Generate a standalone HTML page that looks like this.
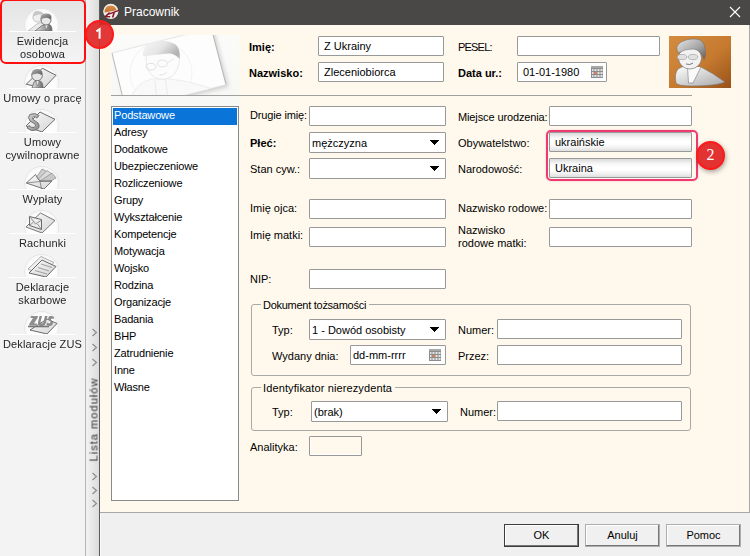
<!DOCTYPE html>
<html><head><meta charset="utf-8">
<style>
*{margin:0;padding:0;box-sizing:border-box}
html,body{width:750px;height:556px;overflow:hidden;background:#f3f3f3;font-family:"Liberation Sans",sans-serif;font-size:11px;color:#000}
.a{position:absolute}
.sb{left:0;top:0;width:85px;height:556px;background:#f3f3f3}
.sbl{left:85px;top:0;width:1px;height:556px;background:#b4b4b4}
.strip{left:86px;top:0;width:13px;height:556px;background:linear-gradient(to right,#f2f2f2,#dcdcdc)}
.dl{left:99px;top:0;width:1px;height:556px;background:#5a5a5a}
.title{left:100px;top:0;width:650px;height:25px;background:#4a4846}
.cream{left:100px;top:25px;width:650px;height:488px;background:#fff9ed;border-right:1px solid #a8a8a8;border-bottom:1px solid #a8a8a8}
.foot{left:100px;top:513px;width:650px;height:43px;background:#f0f0f0}
.lbl{height:20px;line-height:20px;white-space:nowrap}
.b{font-weight:bold}
.in{background:#fff;border:1px solid #999;border-radius:1px;height:20px;line-height:18px;padding-left:5px;white-space:nowrap}
.cb{height:21px;line-height:20px;padding-left:2px}
.ro{background:linear-gradient(to bottom,#dadada,#f6f6f6 25%,#fff 45%,#fff 60%,#f2f2f2 80%,#dedede)}
.tri{position:absolute;right:6px;top:7px;fill:#000}
.list{left:111px;top:106px;width:128px;height:395px;background:#fff;border:1px solid #8a8a8a}
.li{position:absolute;left:1px;width:124px;height:17px;line-height:15px;padding-left:1px;letter-spacing:-0.15px}
.sel{background:#0a74d9;color:#fff}
.grp{border:1px solid #a8a8a8;border-radius:3px}
.leg{background:#fff9ed;padding:0 3px 0 2px;height:14px;line-height:14px}
.btn{top:524px;width:75px;height:23px;background:#f0f0f0;border:1px solid #adadad;box-shadow:inset -1px -1px 0 #777,inset 1px 1px 0 #fff;text-align:center;line-height:21px}
.sbt{width:85px;text-align:center;color:#262626;letter-spacing:0.15px;line-height:13px;will-change:transform}
.sep{left:9px;width:67px;height:1px;background:#fff}
.circ{width:34px;height:26px;overflow:hidden;left:25px}
.circ div{width:34px;height:34px;border-radius:50%;background:radial-gradient(circle at 50% 40%,#fbfbfb,#ececec)}
.chev{left:92px;width:6px;height:8px}
</style></head><body>
<!-- sidebar -->
<div class="a sb"></div>
<div class="a" style="left:0;top:0;width:85px;height:64px;background:linear-gradient(to bottom,#e4e4e4,#f0f0f0 70%,#f4f4f4)"></div>
<div class="a sbl"></div>
<div class="a strip"></div>
<div class="a dl"></div>
<svg class="a" style="left:0;top:0" width="86" height="360" viewBox="0 0 86 360">
<defs>
<radialGradient id="cg" cx="50%" cy="50%" r="50%"><stop offset="0" stop-color="#ffffff"/><stop offset="0.8" stop-color="#fcfcfc"/><stop offset="0.93" stop-color="#f6f6f6"/><stop offset="0.98" stop-color="#e2e2e2"/><stop offset="1" stop-color="#ededed"/></radialGradient>
<linearGradient id="dg" x1="0" y1="0" x2="1" y2="1"><stop offset="0" stop-color="#fbfbfb"/><stop offset="1" stop-color="#d4d4d4"/></linearGradient>
<linearGradient id="hg" x1="0" y1="0" x2="1" y2="1"><stop offset="0" stop-color="#b4b4b4"/><stop offset="1" stop-color="#5a5a5a"/></linearGradient>
<linearGradient id="bg2" x1="0" y1="0" x2="1" y2="0"><stop offset="0" stop-color="#e4e4e4"/><stop offset="1" stop-color="#6a6a6a"/></linearGradient>
<linearGradient id="sg" x1="0" y1="0" x2="1" y2="1"><stop offset="0" stop-color="#d8d8d8"/><stop offset="1" stop-color="#8a8a8a"/></linearGradient>
<clipPath id="c1"><rect x="0" y="0" width="40" height="25"/></clipPath>
</defs>
<g transform="translate(22,6)">
 <g clip-path="url(#c1)"><circle cx="19.7" cy="19.5" r="17.5" fill="url(#cg)"/>
 <path d="M6,25 L15,18 Q18,16 21,17 L26,25 Z" fill="#ebebeb" stroke="#b4b4b4" stroke-width="0.8"/>
 <circle cx="15.5" cy="11.5" r="4.6" fill="#efefef" stroke="#b8b8b8" stroke-width="0.8"/>
 <path d="M10.8,10.5 Q10.5,5 16,5 Q21,5.5 21.5,8 Q17,7.5 10.8,10.5Z" fill="#c8c8c8"/>
 <path d="M13,25 L20,19.5 Q24,18 27,18.5 Q30,19 30,25 Z" fill="url(#bg2)" stroke="#6a6a6a" stroke-width="0.8"/>
 <path d="M23,19 L24,24 L26,19" fill="#f4f4f4" stroke="#777" stroke-width="0.5"/>
 <circle cx="24" cy="14" r="5" fill="#e8e8e8" stroke="#6e6e6e" stroke-width="0.9"/>
 <path d="M18.6,13.5 Q18,7 24,7.5 Q29.5,7.5 29.5,11.5 L28.6,13.5 Q25,10 18.6,13.5Z" fill="url(#hg)"/>
 </g>
</g>
<rect x="9" y="31" width="67" height="1" fill="#fff"/>
<g transform="translate(22,63)">
 <g clip-path="url(#c1)"><circle cx="19.7" cy="19.5" r="17.5" fill="url(#cg)"/>
 <path d="M20.3,5.2 L34,12.3 L22,25 L4.2,21.3 Z" fill="url(#dg)" stroke="#5a5a5a" stroke-width="0.9"/>
 <path d="M10,25 L12,19 Q15,17 18,18 Q21,19 21,25Z" fill="url(#bg2)" stroke="#6a6a6a" stroke-width="0.8"/>
 <path d="M14,18 L15.5,23 L17,18" fill="#f4f4f4" stroke="#777" stroke-width="0.5"/>
 <circle cx="15" cy="12.5" r="5.3" fill="#e6e6e6" stroke="#6a6a6a" stroke-width="0.9"/>
 <path d="M9.6,12 Q9.5,5.8 15,6 Q20.5,6.2 20.5,10.5 L19.6,12 Q16,9 9.6,12Z" fill="url(#hg)"/>
 </g>
</g>
<rect x="9" y="88" width="67" height="1" fill="#fff"/>
<g transform="translate(22,107)">
 <g clip-path="url(#c1)"><circle cx="19.7" cy="19.5" r="17.5" fill="url(#cg)"/>
 <path d="M18,5 L33,12.3 L20,25 L4,19 Z" fill="url(#dg)" stroke="#5a5a5a" stroke-width="0.9"/>
 <path d="M17,8.5 Q13,5 8,7.5 Q5,10 8,14 L13,17 Q15,19 12,20.5 Q9,21 7,18.5 L5,21 Q9,25 14,23 Q19,20.5 16,16 L11,12.5 Q9.5,10.5 11.5,9.8 Q13.5,9.5 15,11Z" fill="url(#sg)" stroke="#6a6a6a" stroke-width="0.9"/>
 </g>
</g>
<rect x="9" y="132" width="67" height="1" fill="#fff"/>
<g transform="translate(22,164)">
 <g clip-path="url(#c1)"><circle cx="19.7" cy="19.5" r="17.5" fill="url(#cg)"/>
 <path d="M14,14 L20,5 L26,8 L20,17Z" fill="#cdcdcd" stroke="#8a8a8a" stroke-width="0.7"/>
 <path d="M16,15.5 L25,6.5 L30,10 L22,18Z" fill="#dcdcdc" stroke="#8a8a8a" stroke-width="0.7"/>
 <path d="M18,17 L30,9 L34,14 L24,20Z" fill="#c8c8c8" stroke="#8a8a8a" stroke-width="0.7"/>
 <path d="M4.3,19 L13.5,10.5 L16,15 L18,17 L30,17 L22,25 Z" fill="url(#dg)" stroke="#6a6a6a" stroke-width="0.9"/>
 <path d="M4.3,19 L18,17.5 L30,17 M18,17.5 L19.5,25" fill="none" stroke="#777" stroke-width="0.8"/>
 </g>
</g>
<rect x="9" y="189" width="67" height="1" fill="#fff"/>
<g transform="translate(22,208)">
 <g clip-path="url(#c1)"><circle cx="19.7" cy="19.5" r="17.5" fill="url(#cg)"/>
 <path d="M18.5,5 L33,12.5 L20,25 L4,19 Z" fill="url(#dg)" stroke="#6a6a6a" stroke-width="0.9"/>
 <path d="M7.5,8.5 L19.5,11.5 L19.5,21.5 L7.5,17.5Z" fill="#ececec" stroke="#6a6a6a" stroke-width="1"/>
 <path d="M8.5,9.5 L13.5,16 L19,12.5 M7.5,17.5 L11.5,14 M19.5,21.5 L15.5,16" fill="none" stroke="#7a7a7a" stroke-width="0.8"/>
 </g>
</g>
<rect x="9" y="233" width="67" height="1" fill="#fff"/>
<g transform="translate(22,252)">
 <g clip-path="url(#c1)"><circle cx="19.7" cy="19.5" r="17.5" fill="url(#cg)"/>
 <path d="M6,17 L19,4.5 L32,10.5 L19,23 Z" fill="#f0f0f0" stroke="#9a9a9a" stroke-width="0.8"/>
 <path d="M7,21 L20,8 L34,14.5 L24,25 Z" fill="url(#dg)" stroke="#5a5a5a" stroke-width="0.9"/>
 <path d="M19,12 L30,15.5 M16,15.5 L27,19 M13,18.5 L25,22" stroke="#a4a4a4" stroke-width="1.3"/>
 </g>
</g>
<rect x="9" y="277" width="67" height="1" fill="#fff"/>
<g transform="translate(22,309)">
 <g clip-path="url(#c1)"><circle cx="19.7" cy="19.5" r="17.5" fill="url(#cg)"/>
 <path d="M8,21 L25,10 L35,14.5 L25,25 Z" fill="url(#dg)" stroke="#5a5a5a" stroke-width="0.9"/>
 <path d="M9,7 L16,7 L15.5,9 L12,14.5 L15,14.5 L14.5,16.5 L7,16.5 L7.5,14.5 L11,9 L8.5,9 Z" fill="#8e8e8e"/>
 <path d="M17.5,7 L20,7 L18.5,13 Q18.5,14.5 20,14.5 Q21,14.5 21.5,13 L23,7 L25.5,7 L24,13.5 Q23,17 19.5,17 Q15.5,17 16,13.5Z" fill="#8a8a8a"/>
 <path d="M32,8 Q30,6.5 28,7 Q25.5,8 26.5,10.5 L28.5,12.5 Q29,14 27.5,14.5 Q26,14.5 25,13.5 L24.5,16 Q26,17 28,17 Q31,16.5 31,13.5 L29,11 Q28.5,9.5 30,9.5 Q31,9.5 31.5,10Z" fill="#8a8a8a"/>
 <path d="M6,17.5 L27,17.5" stroke="#777" stroke-width="1.6"/>
 </g>
</g>
<rect x="9" y="334" width="67" height="1" fill="#fff"/>
</svg>
<div class="a sbt" style="top:35px">Ewidencja<br>osobowa</div>
<div class="a sbt" style="top:92px">Umowy o pracę</div>
<div class="a sbt" style="top:136px">Umowy<br>cywilnoprawne</div>
<div class="a sbt" style="top:193px">Wypłaty</div>
<div class="a sbt" style="top:237px">Rachunki</div>
<div class="a sbt" style="top:281px">Deklaracje<br>skarbowe</div>
<div class="a sbt" style="top:338px">Deklaracje ZUS</div>
<!-- strip -->
<svg class="a" style="left:86px;top:320px" width="13" height="200" viewBox="0 0 13 200">
<g fill="none" stroke="#8a8a8a" stroke-width="1.1">
<path d="M6.5,9 L10.5,12.5 L6.5,16"/>
<path d="M6.5,24 L10.5,27.5 L6.5,31"/>
<path d="M6.5,39 L10.5,42.5 L6.5,46"/>
<path d="M6.5,153 L10.5,156.5 L6.5,160"/>
<path d="M6.5,167 L10.5,170.5 L6.5,174"/>
<path d="M6.5,180 L10.5,183.5 L6.5,187"/>
</g></svg>
<div class="a" style="left:49px;top:413px;width:90px;height:13px;line-height:13px;transform:rotate(-90deg);transform-origin:50% 50%;color:#333;letter-spacing:1.05px;white-space:nowrap;text-align:center;will-change:transform">Lista modułów</div>
<!-- title -->
<div class="a title"></div>
<svg class="a" style="left:102px;top:3px" width="18" height="18" viewBox="0 0 18 18">
<defs><linearGradient id="og" x1="0" y1="0" x2="0" y2="1"><stop offset="0" stop-color="#d8904a"/><stop offset="1" stop-color="#c07030"/></linearGradient></defs>
<circle cx="8.8" cy="8.3" r="7.6" fill="#f2eeea"/>
<path d="M2.6,9.6 Q2.5,3 8.5,2.6 Q13.5,2.8 14.6,7.2 Z" fill="url(#og)"/>
<path d="M7.6,9.6 L3.6,13.4 L8.2,13.8" fill="none" stroke="#8c1424" stroke-width="1.5" stroke-linejoin="round"/>
<path d="M6.6,11.2 L17,7.4" fill="none" stroke="#8c1424" stroke-width="1.4"/>
<path d="M12.2,9.4 L10.6,14.6" fill="none" stroke="#8c1424" stroke-width="1.6"/>
</svg>
<div class="a" style="left:124px;top:4px;height:16px;line-height:16px;font-size:12px;color:#fff">Pracownik</div>
<svg class="a" style="left:729px;top:6px" width="12" height="12" viewBox="0 0 12 12"><path d="M1,1 L11,11 M11,1 L1,11" stroke="#fff" stroke-width="1.1"/></svg>
<div class="a cream"></div>
<div class="a foot"></div>
<div class="a" style="left:100px;top:513px;width:1px;height:43px;background:#fbfbfb"></div>

<!-- header labels -->
<div class="a lbl b" style="left:249px;top:37px">Imię:</div>
<div class="a in" style="left:318px;top:36px;width:126px">Z Ukrainy</div>
<div class="a lbl b" style="left:249px;top:63px">Nazwisko:</div>
<div class="a in" style="left:318px;top:62px;width:126px">Zleceniobiorca</div>
<div class="a lbl" style="left:458px;top:37px;letter-spacing:-0.8px">PESEL:</div>
<div class="a in" style="left:517px;top:36px;width:143px"></div>
<div class="a lbl b" style="left:458px;top:63px">Data ur.:</div>
<div class="a in" style="left:517px;top:62px;width:90px">01-01-1980</div>

<div class="a" style="left:111px;top:95px;width:128px;height:11px;background:#f8f8f7"></div>
<div class="a" style="left:111px;top:95px;width:581px;height:1px;background:#a0a0a0"></div>

<!-- list -->
<div class="a list">
<div class="li sel" style="top:1px">Podstawowe</div>
<div class="li" style="top:18px">Adresy</div>
<div class="li" style="top:35px">Dodatkowe</div>
<div class="li" style="top:52px">Ubezpieczeniowe</div>
<div class="li" style="top:69px">Rozliczeniowe</div>
<div class="li" style="top:86px">Grupy</div>
<div class="li" style="top:103px">Wykształcenie</div>
<div class="li" style="top:120px">Kompetencje</div>
<div class="li" style="top:137px">Motywacja</div>
<div class="li" style="top:154px">Wojsko</div>
<div class="li" style="top:171px">Rodzina</div>
<div class="li" style="top:188px">Organizacje</div>
<div class="li" style="top:205px">Badania</div>
<div class="li" style="top:222px">BHP</div>
<div class="li" style="top:239px">Zatrudnienie</div>
<div class="li" style="top:256px">Inne</div>
<div class="li" style="top:273px">Własne</div>
</div>

<!-- form left column -->
<div class="a lbl" style="left:250px;top:105px;letter-spacing:-0.15px">Drugie imię:</div>
<div class="a in" style="left:309px;top:106px;width:137px"></div>
<div class="a lbl b" style="left:250px;top:133px">Płeć:</div>
<div class="a in cb" style="left:309px;top:132px;width:137px">mężczyzna<svg class="tri" width="9" height="5" viewBox="0 0 9 5" shape-rendering="crispEdges"><rect x="0" y="0" width="9" height="1"/><rect x="1" y="1" width="7" height="1"/><rect x="2" y="2" width="5" height="1"/><rect x="3" y="3" width="3" height="1"/><rect x="4" y="4" width="1" height="1"/></svg></div>
<div class="a lbl" style="left:250px;top:159px">Stan cyw.:</div>
<div class="a in cb" style="left:309px;top:158px;width:137px"><svg class="tri" width="9" height="5" viewBox="0 0 9 5" shape-rendering="crispEdges"><rect x="0" y="0" width="9" height="1"/><rect x="1" y="1" width="7" height="1"/><rect x="2" y="2" width="5" height="1"/><rect x="3" y="3" width="3" height="1"/><rect x="4" y="4" width="1" height="1"/></svg></div>
<div class="a lbl" style="left:250px;top:198px">Imię ojca:</div>
<div class="a in" style="left:309px;top:199px;width:137px"></div>
<div class="a lbl" style="left:250px;top:225px">Imię matki:</div>
<div class="a in" style="left:309px;top:227px;width:137px"></div>
<div class="a lbl" style="left:250px;top:269px">NIP:</div>
<div class="a in" style="left:309px;top:269px;width:137px"></div>

<!-- form right column -->
<div class="a lbl" style="left:458px;top:107px;letter-spacing:-0.12px">Miejsce urodzenia:</div>
<div class="a in" style="left:549px;top:106px;width:143px"></div>
<div class="a lbl" style="left:458px;top:133px">Obywatelstwo:</div>
<div class="a in ro" style="left:549px;top:132px;width:143px">ukraińskie</div>
<div class="a lbl" style="left:458px;top:159px">Narodowość:</div>
<div class="a in ro" style="left:549px;top:158px;width:143px">Ukraina</div>
<div class="a lbl" style="left:458px;top:198px">Nazwisko rodowe:</div>
<div class="a in" style="left:549px;top:199px;width:143px"></div>
<div class="a" style="left:458px;top:224px;line-height:13px">Nazwisko<br>rodowe matki:</div>
<div class="a in" style="left:549px;top:227px;width:143px"></div>

<!-- group 1 -->
<div class="a grp" style="left:251px;top:304px;width:440px;height:72px"></div>
<div class="a leg" style="left:261px;top:298px;letter-spacing:-0.27px">Dokument tożsamości</div>
<div class="a lbl" style="left:272px;top:320px">Typ:</div>
<div class="a in cb" style="left:309px;top:319px;width:137px">1 - Dowód osobisty<svg class="tri" width="9" height="5" viewBox="0 0 9 5" shape-rendering="crispEdges"><rect x="0" y="0" width="9" height="1"/><rect x="1" y="1" width="7" height="1"/><rect x="2" y="2" width="5" height="1"/><rect x="3" y="3" width="3" height="1"/><rect x="4" y="4" width="1" height="1"/></svg></div>
<div class="a lbl" style="left:272px;top:346px">Wydany dnia:</div>
<div class="a in" style="left:350px;top:345px;width:96px;padding-left:2px">dd-mm-rrrr</div>
<div class="a lbl" style="left:458px;top:320px">Numer:</div>
<div class="a in" style="left:497px;top:319px;width:185px"></div>
<div class="a lbl" style="left:458px;top:346px">Przez:</div>
<div class="a in" style="left:497px;top:345px;width:185px"></div>

<!-- group 2 -->
<div class="a grp" style="left:251px;top:387px;width:440px;height:44px"></div>
<div class="a leg" style="left:261px;top:381px;letter-spacing:0.12px">Identyfikator nierezydenta</div>
<div class="a lbl" style="left:272px;top:402px">Typ:</div>
<div class="a in cb" style="left:311px;top:401px;width:137px">(brak)<svg class="tri" width="9" height="5" viewBox="0 0 9 5" shape-rendering="crispEdges"><rect x="0" y="0" width="9" height="1"/><rect x="1" y="1" width="7" height="1"/><rect x="2" y="2" width="5" height="1"/><rect x="3" y="3" width="3" height="1"/><rect x="4" y="4" width="1" height="1"/></svg></div>
<div class="a lbl" style="left:460px;top:402px">Numer:</div>
<div class="a in" style="left:497px;top:401px;width:185px"></div>

<div class="a lbl" style="left:250px;top:437px">Analityka:</div>
<div class="a in" style="left:309px;top:436px;width:53px;background:#fff9ed;box-shadow:inset 1px -1px 0 #fff"></div>

<!-- buttons -->
<div class="a btn" style="left:504px;border-color:#3c3c3c">OK</div>
<div class="a btn" style="left:585px">Anuluj</div>
<div class="a btn" style="left:666px">Pomoc</div>


<!-- photo placeholder -->
<svg class="a" style="left:111px;top:35px" width="128" height="60" viewBox="0 0 128 60">
<defs>
<linearGradient id="pbg" x1="0" y1="0" x2="0" y2="1"><stop offset="0" stop-color="#fbfbfa"/><stop offset="1" stop-color="#f7f7f6"/></linearGradient>
<linearGradient id="hair" x1="0" y1="0" x2="1" y2="0.5"><stop offset="0" stop-color="#f6f6f6"/><stop offset="0.55" stop-color="#e6e6e6"/><stop offset="1" stop-color="#b4b4b4"/></linearGradient>
<filter id="sh" x="-20%" y="-20%" width="140%" height="140%"><feGaussianBlur stdDeviation="2.2"/></filter>
<clipPath id="cc"><path d="M1,18 L100.3,-6.8 L115,49.7 L14.7,74.5 Z"/></clipPath>
</defs>
<rect x="0" y="0" width="128" height="60" fill="url(#pbg)"/>
<path d="M1,18 L100.3,-6.8 L115,49.7 L14.7,74.5 Z" fill="#cfcfcf" filter="url(#sh)" transform="translate(2.5,2)"/>
<path d="M1,18 L100.3,-6.8 L115,49.7 L14.7,74.5 Z" fill="#fdfdfd"/>
<path d="M100.3,-6.8 L115,49.7 M1,18 L14.7,74.5" fill="none" stroke="#a8a8a8" stroke-width="0.8"/>
<path d="M1,18 L100.3,-6.8 M115,49.7 L14.7,74.5" fill="none" stroke="#dedede" stroke-width="0.7"/>
<g clip-path="url(#cc)">
<circle cx="50" cy="38" r="31" fill="none" stroke="#efefef" stroke-width="0.8"/>
<path d="M20,62 Q26,48 40,44 L58,44 Q80,46 104,55 L100,64 L18,64 Z" fill="#f9f9f9" stroke="#e6e6e6" stroke-width="0.7"/>
<path d="M43.8,45 L46,64 M54.6,45 L57,64" fill="none" stroke="#e4e4e4" stroke-width="0.7"/>
<path d="M35,24 Q35,38 45,43 Q52,46 60,42 Q68,36 68.5,24 Q68,14 60,10 Q50,6 40,11 Q35,16 35,24 Z" fill="#fcfcfc" stroke="#e0e0e0" stroke-width="0.7"/>
<path d="M32,21.5 Q31,10 42,7 Q54,3.5 64,9 Q70,14 68.6,23.7 Q62,17 54.6,18.8 Q42,20 32,21.5 Z" fill="url(#hair)"/>
<ellipse cx="40" cy="31.7" rx="5" ry="3.4" fill="none" stroke="#e0e0e0" stroke-width="1"/>
<ellipse cx="51.4" cy="28.5" rx="5" ry="3.4" fill="none" stroke="#e0e0e0" stroke-width="1"/>
<path d="M56.4,27.5 L63,24" stroke="#e2e2e2" stroke-width="0.8"/>
<path d="M48.5,40 Q52.5,40.5 55.5,37.5" fill="none" stroke="#e2e2e2" stroke-width="1"/>
</g>
</svg>

<!-- photo -->
<svg class="a" style="left:669px;top:36px" width="62" height="52" viewBox="0 0 62 52">
<defs>
<linearGradient id="ph" x1="0" y1="0" x2="1" y2="1"><stop offset="0" stop-color="#d48c40"/><stop offset="0.55" stop-color="#c67a30"/><stop offset="1" stop-color="#985218"/></linearGradient>
<linearGradient id="fc" x1="0" y1="0" x2="1" y2="1"><stop offset="0" stop-color="#ffffff"/><stop offset="1" stop-color="#a8a8a8"/></linearGradient>
<linearGradient id="hr" x1="0" y1="0" x2="1" y2="1"><stop offset="0" stop-color="#e8e8e8"/><stop offset="0.6" stop-color="#a0a0a0"/><stop offset="1" stop-color="#5a5a5a"/></linearGradient>
</defs>
<rect width="62" height="52" fill="url(#ph)"/>
<path d="M7,47 Q5,38 9,33 Q13,30 19,30 L32,31 Q44,37 56,46 Q48,50 22,50 Q9,50 7,47 Z" fill="url(#fc)" stroke="#707070" stroke-width="0.6"/>
<path d="M18.5,31 L19.5,47 L24,47 L32,31" fill="#fafafa" stroke="#777" stroke-width="0.6"/>
<ellipse cx="21" cy="22" rx="11.5" ry="11" fill="#f2f2f2" stroke="#666" stroke-width="0.6"/>
<path d="M9.5,17 Q5,11 12,6 Q22,1 31,4 Q37,7 36.5,19 L35,24 Q33,14 24,13 Q15,13 9.5,17 Z" fill="url(#hr)" stroke="#6a6a6a" stroke-width="0.5"/>
<ellipse cx="13" cy="21" rx="4.8" ry="2.6" fill="#e0e0e0" stroke="#9a9a9a" stroke-width="0.6"/>
<ellipse cx="24" cy="21" rx="4.8" ry="2.6" fill="#e0e0e0" stroke="#9a9a9a" stroke-width="0.6"/>
<path d="M17,28 Q21,29.5 24,27" fill="none" stroke="#7a7a7a" stroke-width="1"/>
</svg>

<!-- calendars -->
<svg class="a" style="left:591px;top:66px" width="12" height="12" viewBox="0 0 12 12">
<rect width="12" height="12" fill="#8c8c8c"/><rect x="0" y="0" width="12" height="2" fill="#a8a8a8"/>
<g fill="#e4e4e4"><rect x="1" y="3" width="1.5" height="2"/><rect x="3.5" y="3" width="2" height="2"/><rect x="6.5" y="3" width="2" height="2"/><rect x="9.5" y="3" width="2" height="2"/>
<rect x="1" y="6" width="1.5" height="2"/><rect x="6.5" y="6" width="2" height="2"/><rect x="9.5" y="6" width="2" height="2"/>
<rect x="1" y="9" width="1.5" height="2"/><rect x="3.5" y="9" width="2" height="2"/><rect x="6.5" y="9" width="2" height="2"/><rect x="9.5" y="9" width="2" height="2"/></g>
<rect x="3.5" y="6" width="2" height="2" fill="#f07a4a"/>
</svg>
<svg class="a" style="left:429px;top:349px" width="12" height="12" viewBox="0 0 12 12">
<rect width="12" height="12" fill="#8c8c8c"/><rect x="0" y="0" width="12" height="2" fill="#a8a8a8"/>
<g fill="#e4e4e4"><rect x="1" y="3" width="1.5" height="2"/><rect x="3.5" y="3" width="2" height="2"/><rect x="6.5" y="3" width="2" height="2"/><rect x="9.5" y="3" width="2" height="2"/>
<rect x="1" y="6" width="1.5" height="2"/><rect x="6.5" y="6" width="2" height="2"/><rect x="9.5" y="6" width="2" height="2"/>
<rect x="1" y="9" width="1.5" height="2"/><rect x="3.5" y="9" width="2" height="2"/><rect x="6.5" y="9" width="2" height="2"/><rect x="9.5" y="9" width="2" height="2"/></g>
<rect x="3.5" y="6" width="2" height="2" fill="#f07a4a"/>
</svg>

<!-- annotations -->
<div class="a" style="left:0;top:-1px;width:86px;height:65px;border:2px solid #ff1010;border-radius:6px"></div>
<div class="a" style="left:546px;top:130px;width:152px;height:51px;border:2px solid #ee3a72;border-radius:5px;box-shadow:0 0 2px rgba(238,58,114,0.35)"></div>
<div class="a" style="left:85px;top:20px;width:29px;height:29px;border-radius:50%;background:rgba(224,40,40,0.92);border:2px solid #ff1a1a"></div>
<svg class="a" style="left:94px;top:26px" width="10" height="16" viewBox="0 0 10 16"><path d="M2.4,5.4 L5.6,3.2 L5.6,12.8" fill="none" stroke="#fff" stroke-width="2" stroke-linejoin="miter"/></svg>
<div class="a" style="left:696px;top:141px;width:29px;height:29px;border-radius:50%;background:#e23232;border:2px solid #ff1a1a;box-shadow:1px 2px 5px rgba(0,0,0,0.35);color:#fff;font-family:'Liberation Serif',serif;font-size:16px;text-align:center;line-height:24px">2</div>
</body></html>
